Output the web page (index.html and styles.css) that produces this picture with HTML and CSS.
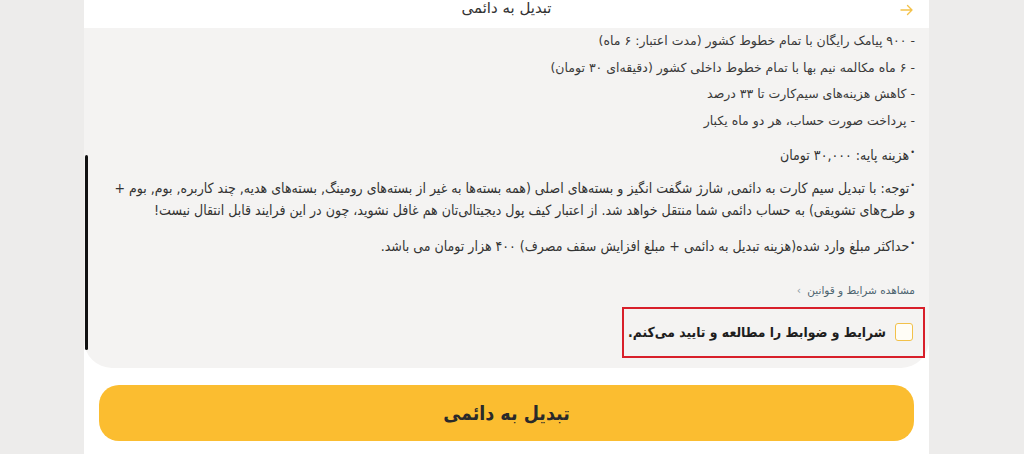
FILE: index.html
```html
<!DOCTYPE html>
<html lang="fa" dir="rtl">
<head>
<meta charset="utf-8">
<link rel="stylesheet" href="styles.css">
</head>
<body>
<div class="page">
  <div class="header">
    <span class="arrow"><svg width="14" height="12" viewBox="0 0 14 12"><path d="M1 6H12M7.5 1.5L12 6L7.5 10.5" fill="none" stroke="#f3c24a" stroke-width="1.4" stroke-linecap="round" stroke-linejoin="round"/></svg></span>
    <span class="title">تبدیل به دائمی</span>
  </div>
  <div class="content">
    <div class="scrollmark"></div>
    <ul class="features">
      <li>- ۹۰۰ پیامک رایگان با تمام خطوط کشور (مدت اعتبار: ۶ ماه)</li>
      <li>- ۶ ماه مکالمه نیم بها با تمام خطوط داخلی کشور (دقیقه‌ای ۳۰ تومان)</li>
      <li>- کاهش هزینه‌های سیم‌کارت تا ۳۳ درصد</li>
      <li>- پرداخت صورت حساب، هر دو ماه یکبار</li>
    </ul>
    <div class="notes">
      <p><span class="dot">•</span>هزینه پایه: ۳۰,۰۰۰ تومان</p>
      <p><span class="dot">•</span>توجه: با تبدیل سیم کارت به دائمی, شارژ شگفت انگیز و بسته‌های اصلی (همه بسته‌ها به غیر از بسته‌های رومینگ, بسته‌های هدیه, چند کاربره, بوم, بوم +<br>و طرح‌های تشویقی) به حساب دائمی شما منتقل خواهد شد. از اعتبار کیف پول دیجیتالی‌تان هم غافل نشوید، چون در این فرایند قابل انتقال نیست!</p>
      <p><span class="dot">•</span>حداکثر مبلغ وارد شده(هزینه تبدیل به دائمی + مبلغ افزایش سقف مصرف) ۴۰۰ هزار تومان می باشد.</p>
    </div>
    <div class="terms-link">مشاهده شرایط و قوانین <span class="chev">›</span></div>
    <div class="agree">
      <span class="check"></span>
      <span class="agree-text">شرایط و ضوابط را مطالعه و تایید می‌کنم.</span>
    </div>
  </div>
  <div class="actions">
    <button class="primary">تبدیل به دائمی</button>
  </div>
</div>
</body>
</html>
```
FILE: styles.css
```css
html, body {
  margin: 0;
  padding: 0;
  background: #edeceb;
  height: 454px;
  overflow: hidden;
}
body {
  font-family: "DejaVu Sans", "Noto Sans", sans-serif;
  color: #333;
}
.page {
  width: 845px;
  margin-right: 95px;
  background: #fff;
  height: 454px;
}
.header {
  height: 28px;
  background: #fff;
  display: flex;
  align-items: flex-start;
  justify-content: center;
  position: relative;
}
.title {
  font-size: 15px;
  line-height: 17px;
  color: #333;
}
.arrow {
  position: absolute;
  right: 15px;
  top: 1px;
}
.content {
  position: relative;
  background: #f4f3f2;
  border-radius: 0 0 28px 28px;
  height: 340px;
  padding: 0 14px 0 10px;
  box-sizing: border-box;
}
.scrollmark {
  position: absolute;
  left: 1px;
  top: 127px;
  width: 3px;
  height: 195px;
  background: #111;
  border-radius: 2px;
}
.features {
  list-style: none;
  margin: 0;
  padding: 0;
  font-size: 12.5px;
  line-height: 26.7px;
  color: #3a3a3a;
}
.notes {
  margin-top: 9px;
  font-family: "DejaVu Sans Condensed", "DejaVu Sans", sans-serif;
  font-size: 14px;
  line-height: 22px;
  color: #333;
}
.notes p {
  margin: 0 0 11px 0;
}
.notes p:last-child {
  margin-top: 14px;
}
.dot {
  display: inline-block;
  font-size: 9px;
  line-height: 10px;
  vertical-align: 5px;
  margin-left: 1px;
}
.terms-link {
  margin-top: 25px;
  font-size: 10.5px;
  line-height: 16px;
  color: #4d6470;
}
.chev {
  color: #8a9aa3;
  margin-right: 3px;
}
.agree {
  margin-top: 9px;
  width: 303px;
  height: 51px;
  box-sizing: border-box;
  border: 2px solid #d81f2a;
  margin-right: -10px;
  display: flex;
  align-items: center;
  padding-right: 10px;
  gap: 9px;
}
.check {
  width: 16px;
  height: 16px;
  border: 1.5px solid #f2c14a;
  border-radius: 3px;
  background: #fffdf6;
  flex: none;
}
.agree-text {
  font-family: "DejaVu Sans Condensed", "DejaVu Sans", sans-serif;
  font-size: 13.8px;
  font-weight: bold;
  color: #1e1e1e;
  white-space: nowrap;
}
.actions {
  padding: 17px 15px 0 15px;
}
.primary {
  display: block;
  width: 100%;
  height: 56px;
  border: none;
  border-radius: 20px;
  background: #fbbd30;
  font-family: "DejaVu Sans Condensed", "DejaVu Sans", sans-serif;
  font-size: 19.5px;
  font-weight: bold;
  color: #2a2a2a;
}
```
